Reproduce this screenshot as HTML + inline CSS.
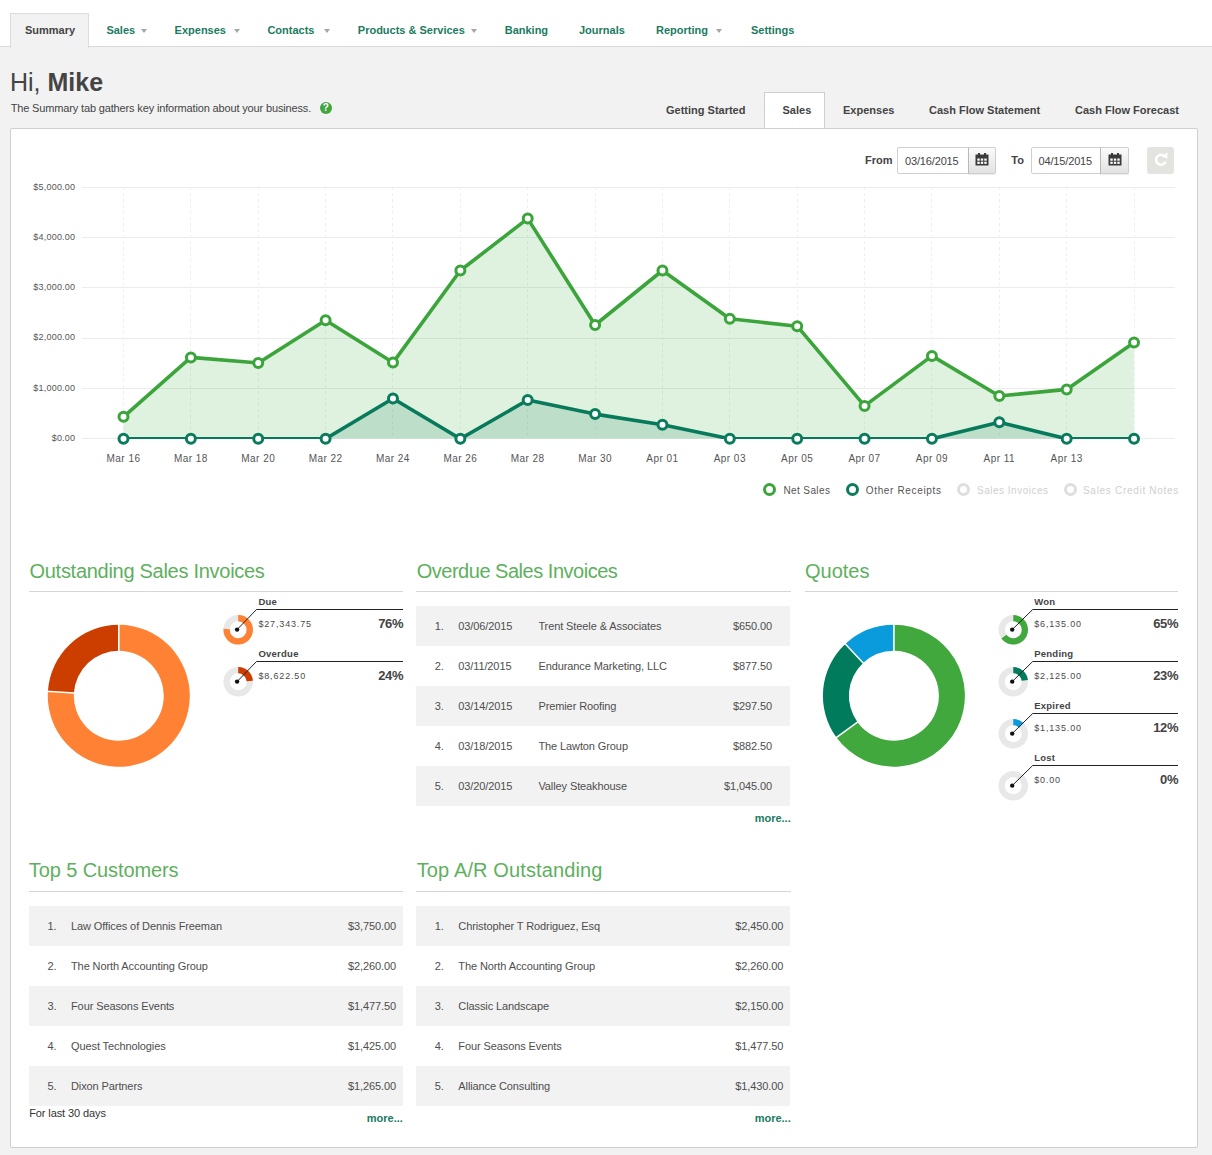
<!DOCTYPE html><html><head><meta charset="utf-8"><style>
*{margin:0;padding:0;box-sizing:border-box}
html,body{width:1212px;height:1155px;overflow:hidden;background:#f2f2f2;font-family:"Liberation Sans",sans-serif}
.t{position:absolute;white-space:pre;line-height:1}
.a{position:absolute}
</style></head><body>
<div class="a" style="left:0;top:0;width:1212px;height:47px;background:#fff;border-bottom:1px solid #d9d9d9"></div>
<div class="a" style="left:10px;top:13px;width:79px;height:35px;background:#f2f2f2;border:1px solid #dcdcdc;border-bottom:none"></div>
<div class="t" style="left:25.00px;top:24.69px;font-size:11px;color:#444;font-weight:bold;">Summary</div>
<div class="t" style="left:106.40px;top:24.69px;font-size:11px;color:#1b7b5f;font-weight:bold;">Sales</div>
<div class="a" style="left:141px;top:28.5px;width:0;height:0;border-left:3.5px solid transparent;border-right:3.5px solid transparent;border-top:4px solid #a6a6a6"></div>
<div class="t" style="left:174.60px;top:24.69px;font-size:11px;color:#1b7b5f;font-weight:bold;">Expenses</div>
<div class="a" style="left:234px;top:28.5px;width:0;height:0;border-left:3.5px solid transparent;border-right:3.5px solid transparent;border-top:4px solid #a6a6a6"></div>
<div class="t" style="left:267.40px;top:24.69px;font-size:11px;color:#1b7b5f;font-weight:bold;">Contacts</div>
<div class="a" style="left:323.5px;top:28.5px;width:0;height:0;border-left:3.5px solid transparent;border-right:3.5px solid transparent;border-top:4px solid #a6a6a6"></div>
<div class="t" style="left:357.80px;top:24.69px;font-size:11px;color:#1b7b5f;font-weight:bold;">Products &amp; Services</div>
<div class="a" style="left:471px;top:28.5px;width:0;height:0;border-left:3.5px solid transparent;border-right:3.5px solid transparent;border-top:4px solid #a6a6a6"></div>
<div class="t" style="left:504.70px;top:24.69px;font-size:11px;color:#1b7b5f;font-weight:bold;">Banking</div>
<div class="t" style="left:579.00px;top:24.69px;font-size:11px;color:#1b7b5f;font-weight:bold;">Journals</div>
<div class="t" style="left:656.00px;top:24.69px;font-size:11px;color:#1b7b5f;font-weight:bold;">Reporting</div>
<div class="a" style="left:716px;top:28.5px;width:0;height:0;border-left:3.5px solid transparent;border-right:3.5px solid transparent;border-top:4px solid #a6a6a6"></div>
<div class="t" style="left:751.00px;top:24.69px;font-size:11px;color:#1b7b5f;font-weight:bold;">Settings</div>
<div class="t" style="left:10.00px;top:69.84px;font-size:25px;color:#444;">Hi, <b>Mike</b></div>
<div class="t" style="left:10.70px;top:103.19px;font-size:11px;color:#444;letter-spacing:-0.15px;">The Summary tab gathers key information about your business.</div>
<div class="a" style="left:319.5px;top:101.5px;width:12.5px;height:12.5px;border-radius:50%;background:#41a43f;color:#fff;font-size:10px;font-weight:bold;line-height:12.5px;text-align:center">?</div>
<div class="a" style="left:10px;top:128px;width:1188px;height:1020px;background:#fff;border:1px solid #cfcfcf;border-radius:2px"></div>
<div class="a" style="left:764px;top:92px;width:61px;height:36px;background:#fff;border:1px solid #cfcfcf;border-bottom:none"></div>
<div class="t" style="left:666.00px;top:105.09px;font-size:11px;color:#444;font-weight:bold;">Getting Started</div>
<div class="t" style="left:782.50px;top:105.09px;font-size:11px;color:#444;font-weight:bold;">Sales</div>
<div class="t" style="left:843.00px;top:105.09px;font-size:11px;color:#444;font-weight:bold;">Expenses</div>
<div class="t" style="left:929.00px;top:105.09px;font-size:11px;color:#444;font-weight:bold;">Cash Flow Statement</div>
<div class="t" style="left:1075.00px;top:105.09px;font-size:11px;color:#444;font-weight:bold;">Cash Flow Forecast</div>
<div class="t" style="left:865.00px;top:155.19px;font-size:11px;color:#444;font-weight:bold;">From</div>
<div class="a" style="left:897px;top:147px;width:99px;height:27px;border:1px solid #cfcfcf;border-radius:2px;background:#fff"></div>
<div class="a" style="left:967.5px;top:147px;width:28.5px;height:27px;border:1px solid #cfcfcf;border-left:1px solid #b9b9b9;border-radius:0 2px 2px 0;background:linear-gradient(#fbfbfb,#e2e2e2);box-shadow:0 1px 1px rgba(0,0,0,0.08)"></div>
<div class="t" style="left:905.00px;top:155.69px;font-size:11px;color:#444;letter-spacing:-0.15px;">03/16/2015</div>
<svg class="a" style="left:975.0px;top:153px" width="14" height="13" viewBox="0 0 14 13"><rect x="0.5" y="1.5" width="13" height="11" fill="#3a3a3a"/><rect x="3" y="0" width="2" height="3" fill="#3a3a3a"/><rect x="9" y="0" width="2" height="3" fill="#3a3a3a"/><rect x="2.3" y="5.5" width="2.4" height="2.2" fill="#fff"/><rect x="2.3" y="8.7" width="2.4" height="2.2" fill="#fff"/><rect x="5.8" y="5.5" width="2.4" height="2.2" fill="#fff"/><rect x="5.8" y="8.7" width="2.4" height="2.2" fill="#fff"/><rect x="9.3" y="5.5" width="2.4" height="2.2" fill="#fff"/><rect x="9.3" y="8.7" width="2.4" height="2.2" fill="#fff"/></svg>
<div class="t" style="left:1011.30px;top:155.19px;font-size:11px;color:#444;font-weight:bold;">To</div>
<div class="a" style="left:1030.5px;top:147px;width:98.5px;height:27px;border:1px solid #cfcfcf;border-radius:2px;background:#fff"></div>
<div class="a" style="left:1100.3px;top:147px;width:28.700000000000045px;height:27px;border:1px solid #cfcfcf;border-left:1px solid #b9b9b9;border-radius:0 2px 2px 0;background:linear-gradient(#fbfbfb,#e2e2e2);box-shadow:0 1px 1px rgba(0,0,0,0.08)"></div>
<div class="t" style="left:1038.50px;top:155.69px;font-size:11px;color:#444;letter-spacing:-0.15px;">04/15/2015</div>
<svg class="a" style="left:1107.8px;top:153px" width="14" height="13" viewBox="0 0 14 13"><rect x="0.5" y="1.5" width="13" height="11" fill="#3a3a3a"/><rect x="3" y="0" width="2" height="3" fill="#3a3a3a"/><rect x="9" y="0" width="2" height="3" fill="#3a3a3a"/><rect x="2.3" y="5.5" width="2.4" height="2.2" fill="#fff"/><rect x="2.3" y="8.7" width="2.4" height="2.2" fill="#fff"/><rect x="5.8" y="5.5" width="2.4" height="2.2" fill="#fff"/><rect x="5.8" y="8.7" width="2.4" height="2.2" fill="#fff"/><rect x="9.3" y="5.5" width="2.4" height="2.2" fill="#fff"/><rect x="9.3" y="8.7" width="2.4" height="2.2" fill="#fff"/></svg>
<div class="a" style="left:1147px;top:147px;width:27px;height:27px;border-radius:3px;background:#e3e3e0"></div>
<svg class="a" style="left:1153px;top:152px" width="16" height="16" viewBox="0 0 16 16"><path d="M12.63 9.81 A5 5 0 1 1 10.8 3.5" fill="none" stroke="#fff" stroke-width="2.5"/><path d="M9.0 4.4 L14.4 0.3 L14.4 6.8 Z" fill="#fff"/></svg>
<svg class="a" style="left:0;top:0" width="1212" height="520" viewBox="0 0 1212 520"><line x1="82" y1="438.5" x2="1175" y2="438.5" stroke="#ececec" stroke-width="1"/><line x1="82" y1="388.5" x2="1175" y2="388.5" stroke="#ececec" stroke-width="1"/><line x1="82" y1="338.5" x2="1175" y2="338.5" stroke="#ececec" stroke-width="1"/><line x1="82" y1="287.5" x2="1175" y2="287.5" stroke="#ececec" stroke-width="1"/><line x1="82" y1="237.5" x2="1175" y2="237.5" stroke="#ececec" stroke-width="1"/><line x1="82" y1="187.5" x2="1175" y2="187.5" stroke="#ececec" stroke-width="1"/><line x1="123.5" y1="187" x2="123.5" y2="438" stroke="#efefef" stroke-width="1" stroke-dasharray="3,3"/><line x1="190.5" y1="187" x2="190.5" y2="438" stroke="#efefef" stroke-width="1" stroke-dasharray="3,3"/><line x1="258.5" y1="187" x2="258.5" y2="438" stroke="#efefef" stroke-width="1" stroke-dasharray="3,3"/><line x1="325.5" y1="187" x2="325.5" y2="438" stroke="#efefef" stroke-width="1" stroke-dasharray="3,3"/><line x1="392.5" y1="187" x2="392.5" y2="438" stroke="#efefef" stroke-width="1" stroke-dasharray="3,3"/><line x1="460.5" y1="187" x2="460.5" y2="438" stroke="#efefef" stroke-width="1" stroke-dasharray="3,3"/><line x1="527.5" y1="187" x2="527.5" y2="438" stroke="#efefef" stroke-width="1" stroke-dasharray="3,3"/><line x1="595.5" y1="187" x2="595.5" y2="438" stroke="#efefef" stroke-width="1" stroke-dasharray="3,3"/><line x1="662.5" y1="187" x2="662.5" y2="438" stroke="#efefef" stroke-width="1" stroke-dasharray="3,3"/><line x1="729.5" y1="187" x2="729.5" y2="438" stroke="#efefef" stroke-width="1" stroke-dasharray="3,3"/><line x1="797.5" y1="187" x2="797.5" y2="438" stroke="#efefef" stroke-width="1" stroke-dasharray="3,3"/><line x1="864.5" y1="187" x2="864.5" y2="438" stroke="#efefef" stroke-width="1" stroke-dasharray="3,3"/><line x1="931.5" y1="187" x2="931.5" y2="438" stroke="#efefef" stroke-width="1" stroke-dasharray="3,3"/><line x1="999.5" y1="187" x2="999.5" y2="438" stroke="#efefef" stroke-width="1" stroke-dasharray="3,3"/><line x1="1066.5" y1="187" x2="1066.5" y2="438" stroke="#efefef" stroke-width="1" stroke-dasharray="3,3"/><line x1="1134.5" y1="187" x2="1134.5" y2="438" stroke="#efefef" stroke-width="1" stroke-dasharray="3,3"/><polygon points="123.50,416.80 190.87,357.40 258.24,362.90 325.61,320.30 392.98,362.60 460.35,270.50 527.72,218.60 595.09,325.00 662.46,270.50 729.83,318.80 797.20,326.20 864.57,405.90 931.94,355.90 999.31,396.00 1066.68,389.40 1134.05,342.60 1134.05,438.6 123.50,438.6" fill="#3ba53b" fill-opacity="0.16"/><polygon points="123.50,438.80 190.87,438.80 258.24,438.80 325.61,438.80 392.98,398.50 460.35,438.80 527.72,400.00 595.09,414.10 662.46,424.80 729.83,438.80 797.20,438.80 864.57,438.80 931.94,438.80 999.31,422.30 1066.68,438.80 1134.05,438.80 1134.05,438.6 123.50,438.6" fill="#007a5a" fill-opacity="0.15"/><defs><clipPath id="cc"><rect x="0" y="150" width="1212" height="289"/></clipPath></defs><polyline points="123.50,416.80 190.87,357.40 258.24,362.90 325.61,320.30 392.98,362.60 460.35,270.50 527.72,218.60 595.09,325.00 662.46,270.50 729.83,318.80 797.20,326.20 864.57,405.90 931.94,355.90 999.31,396.00 1066.68,389.40 1134.05,342.60" fill="none" stroke="#3ba53b" stroke-width="3.6" stroke-linejoin="round" clip-path="url(#cc)"/><polyline points="123.50,438.80 190.87,438.80 258.24,438.80 325.61,438.80 392.98,398.50 460.35,438.80 527.72,400.00 595.09,414.10 662.46,424.80 729.83,438.80 797.20,438.80 864.57,438.80 931.94,438.80 999.31,422.30 1066.68,438.80 1134.05,438.80" fill="none" stroke="#087a5c" stroke-width="3.6" stroke-linejoin="round" clip-path="url(#cc)"/><circle cx="123.50" cy="416.80" r="4.5" fill="#fff" stroke="#3ba53b" stroke-width="3"/><circle cx="190.87" cy="357.40" r="4.5" fill="#fff" stroke="#3ba53b" stroke-width="3"/><circle cx="258.24" cy="362.90" r="4.5" fill="#fff" stroke="#3ba53b" stroke-width="3"/><circle cx="325.61" cy="320.30" r="4.5" fill="#fff" stroke="#3ba53b" stroke-width="3"/><circle cx="392.98" cy="362.60" r="4.5" fill="#fff" stroke="#3ba53b" stroke-width="3"/><circle cx="460.35" cy="270.50" r="4.5" fill="#fff" stroke="#3ba53b" stroke-width="3"/><circle cx="527.72" cy="218.60" r="4.5" fill="#fff" stroke="#3ba53b" stroke-width="3"/><circle cx="595.09" cy="325.00" r="4.5" fill="#fff" stroke="#3ba53b" stroke-width="3"/><circle cx="662.46" cy="270.50" r="4.5" fill="#fff" stroke="#3ba53b" stroke-width="3"/><circle cx="729.83" cy="318.80" r="4.5" fill="#fff" stroke="#3ba53b" stroke-width="3"/><circle cx="797.20" cy="326.20" r="4.5" fill="#fff" stroke="#3ba53b" stroke-width="3"/><circle cx="864.57" cy="405.90" r="4.5" fill="#fff" stroke="#3ba53b" stroke-width="3"/><circle cx="931.94" cy="355.90" r="4.5" fill="#fff" stroke="#3ba53b" stroke-width="3"/><circle cx="999.31" cy="396.00" r="4.5" fill="#fff" stroke="#3ba53b" stroke-width="3"/><circle cx="1066.68" cy="389.40" r="4.5" fill="#fff" stroke="#3ba53b" stroke-width="3"/><circle cx="1134.05" cy="342.60" r="4.5" fill="#fff" stroke="#3ba53b" stroke-width="3"/><circle cx="123.50" cy="438.80" r="4.5" fill="#fff" stroke="#0a7b5c" stroke-width="3"/><circle cx="190.87" cy="438.80" r="4.5" fill="#fff" stroke="#0a7b5c" stroke-width="3"/><circle cx="258.24" cy="438.80" r="4.5" fill="#fff" stroke="#0a7b5c" stroke-width="3"/><circle cx="325.61" cy="438.80" r="4.5" fill="#fff" stroke="#0a7b5c" stroke-width="3"/><circle cx="392.98" cy="398.50" r="4.5" fill="#fff" stroke="#0a7b5c" stroke-width="3"/><circle cx="460.35" cy="438.80" r="4.5" fill="#fff" stroke="#0a7b5c" stroke-width="3"/><circle cx="527.72" cy="400.00" r="4.5" fill="#fff" stroke="#0a7b5c" stroke-width="3"/><circle cx="595.09" cy="414.10" r="4.5" fill="#fff" stroke="#0a7b5c" stroke-width="3"/><circle cx="662.46" cy="424.80" r="4.5" fill="#fff" stroke="#0a7b5c" stroke-width="3"/><circle cx="729.83" cy="438.80" r="4.5" fill="#fff" stroke="#0a7b5c" stroke-width="3"/><circle cx="797.20" cy="438.80" r="4.5" fill="#fff" stroke="#0a7b5c" stroke-width="3"/><circle cx="864.57" cy="438.80" r="4.5" fill="#fff" stroke="#0a7b5c" stroke-width="3"/><circle cx="931.94" cy="438.80" r="4.5" fill="#fff" stroke="#0a7b5c" stroke-width="3"/><circle cx="999.31" cy="422.30" r="4.5" fill="#fff" stroke="#0a7b5c" stroke-width="3"/><circle cx="1066.68" cy="438.80" r="4.5" fill="#fff" stroke="#0a7b5c" stroke-width="3"/><circle cx="1134.05" cy="438.80" r="4.5" fill="#fff" stroke="#0a7b5c" stroke-width="3"/></svg>
<div class="t" style="right:1136.80px;top:433.98px;font-size:9px;color:#555;letter-spacing:0.2px;">$0.00</div>
<div class="t" style="right:1136.80px;top:383.71px;font-size:9px;color:#555;letter-spacing:0.2px;">$1,000.00</div>
<div class="t" style="right:1136.80px;top:333.44px;font-size:9px;color:#555;letter-spacing:0.2px;">$2,000.00</div>
<div class="t" style="right:1136.80px;top:283.17px;font-size:9px;color:#555;letter-spacing:0.2px;">$3,000.00</div>
<div class="t" style="right:1136.80px;top:232.90px;font-size:9px;color:#555;letter-spacing:0.2px;">$4,000.00</div>
<div class="t" style="right:1136.80px;top:182.63px;font-size:9px;color:#555;letter-spacing:0.2px;">$5,000.00</div>
<div class="t" style="left:-176.50px;width:600px;text-align:center;top:454.34px;font-size:10px;color:#555;letter-spacing:0.45px;">Mar 16</div>
<div class="t" style="left:-109.13px;width:600px;text-align:center;top:454.34px;font-size:10px;color:#555;letter-spacing:0.45px;">Mar 18</div>
<div class="t" style="left:-41.76px;width:600px;text-align:center;top:454.34px;font-size:10px;color:#555;letter-spacing:0.45px;">Mar 20</div>
<div class="t" style="left:25.61px;width:600px;text-align:center;top:454.34px;font-size:10px;color:#555;letter-spacing:0.45px;">Mar 22</div>
<div class="t" style="left:92.98px;width:600px;text-align:center;top:454.34px;font-size:10px;color:#555;letter-spacing:0.45px;">Mar 24</div>
<div class="t" style="left:160.35px;width:600px;text-align:center;top:454.34px;font-size:10px;color:#555;letter-spacing:0.45px;">Mar 26</div>
<div class="t" style="left:227.72px;width:600px;text-align:center;top:454.34px;font-size:10px;color:#555;letter-spacing:0.45px;">Mar 28</div>
<div class="t" style="left:295.09px;width:600px;text-align:center;top:454.34px;font-size:10px;color:#555;letter-spacing:0.45px;">Mar 30</div>
<div class="t" style="left:362.46px;width:600px;text-align:center;top:454.34px;font-size:10px;color:#555;letter-spacing:0.45px;">Apr 01</div>
<div class="t" style="left:429.83px;width:600px;text-align:center;top:454.34px;font-size:10px;color:#555;letter-spacing:0.45px;">Apr 03</div>
<div class="t" style="left:497.20px;width:600px;text-align:center;top:454.34px;font-size:10px;color:#555;letter-spacing:0.45px;">Apr 05</div>
<div class="t" style="left:564.57px;width:600px;text-align:center;top:454.34px;font-size:10px;color:#555;letter-spacing:0.45px;">Apr 07</div>
<div class="t" style="left:631.94px;width:600px;text-align:center;top:454.34px;font-size:10px;color:#555;letter-spacing:0.45px;">Apr 09</div>
<div class="t" style="left:699.31px;width:600px;text-align:center;top:454.34px;font-size:10px;color:#555;letter-spacing:0.45px;">Apr 11</div>
<div class="t" style="left:766.68px;width:600px;text-align:center;top:454.34px;font-size:10px;color:#555;letter-spacing:0.45px;">Apr 13</div>
<div class="a" style="left:763px;top:483px;width:13px;height:13px;border-radius:50%;border:3px solid #3ba53b"></div>
<div class="t" style="left:783.40px;top:485.94px;font-size:10px;color:#555;letter-spacing:0.4px;">Net Sales</div>
<div class="a" style="left:845.6px;top:483px;width:13px;height:13px;border-radius:50%;border:3px solid #0a7b5c"></div>
<div class="t" style="left:865.80px;top:485.94px;font-size:10px;color:#555;letter-spacing:0.65px;">Other Receipts</div>
<div class="a" style="left:957px;top:483px;width:13px;height:13px;border-radius:50%;border:3px solid #dedede"></div>
<div class="t" style="left:977.00px;top:485.94px;font-size:10px;color:#cfcfcf;letter-spacing:0.5px;">Sales Invoices</div>
<div class="a" style="left:1063.5px;top:483px;width:13px;height:13px;border-radius:50%;border:3px solid #dedede"></div>
<div class="t" style="left:1083.00px;top:485.94px;font-size:10px;color:#cfcfcf;letter-spacing:0.7px;">Sales Credit Notes</div>
<div class="t" style="left:29.50px;top:561.27px;font-size:20px;color:#5eb05e;letter-spacing:-0.28px;">Outstanding Sales Invoices</div>
<div class="a" style="left:29px;top:591px;width:374px;height:1px;background:#d6d6d6"></div>
<svg class="a" style="left:0;top:0" width="1212" height="820" viewBox="0 0 1212 820"><path d="M118.80 624.80 A71 71 0 1 1 47.94 691.34 L73.89 692.97 A45 45 0 1 0 118.80 650.80 Z" fill="#ff8133"/><path d="M47.94 691.34 A71 71 0 0 1 118.80 624.80 L118.80 650.80 A45 45 0 0 0 73.89 692.97 Z" fill="#cc3d00"/><line x1="118.80" y1="695.80" x2="118.80" y2="622.80" stroke="#fff" stroke-width="1.6"/><line x1="118.80" y1="695.80" x2="45.94" y2="691.22" stroke="#fff" stroke-width="1.6"/></svg>
<svg class="a" style="left:0;top:0" width="1212" height="820" viewBox="0 0 1212 820"><circle cx="238.2" cy="629.8000000000001" r="11.6" fill="none" stroke="#e8e8e8" stroke-width="6.3"/><path d="M238.20 615.05 A14.75 14.75 0 1 1 223.48 628.87 L229.77 629.27 A8.45 8.45 0 1 0 238.20 621.35 Z" fill="#ff8133"/><polyline points="237.1,629.6 256.5,609.5 403,609.5" fill="none" stroke="#222" stroke-width="1"/><circle cx="237.1" cy="629.6" r="2.2" fill="#111"/><circle cx="238.2" cy="681.8000000000001" r="11.6" fill="none" stroke="#e8e8e8" stroke-width="6.3"/><path d="M238.20 667.05 A14.75 14.75 0 0 1 252.92 680.87 L246.63 681.27 A8.45 8.45 0 0 0 238.20 673.35 Z" fill="#cc3d00"/><polyline points="237.1,681.6 256.5,661.5 403,661.5" fill="none" stroke="#222" stroke-width="1"/><circle cx="237.1" cy="681.6" r="2.2" fill="#111"/></svg>
<div class="t" style="left:258.40px;top:596.66px;font-size:9.5px;color:#444;font-weight:bold;letter-spacing:0.25px;">Due</div>
<div class="t" style="left:258.40px;top:619.98px;font-size:9px;color:#4a4a4a;letter-spacing:0.85px;">$27,343.75</div>
<div class="t" style="right:809.00px;top:616.60px;font-size:13px;color:#444;font-weight:bold;letter-spacing:-0.45px;">76%</div>
<div class="t" style="left:258.40px;top:648.66px;font-size:9.5px;color:#444;font-weight:bold;letter-spacing:0.25px;">Overdue</div>
<div class="t" style="left:258.40px;top:671.98px;font-size:9px;color:#4a4a4a;letter-spacing:0.85px;">$8,622.50</div>
<div class="t" style="right:809.00px;top:668.60px;font-size:13px;color:#444;font-weight:bold;letter-spacing:-0.45px;">24%</div>
<div class="t" style="left:416.70px;top:561.27px;font-size:20px;color:#5eb05e;letter-spacing:-0.48px;">Overdue Sales Invoices</div>
<div class="a" style="left:416px;top:591px;width:374.5px;height:1px;background:#d6d6d6"></div>
<div class="a" style="left:416px;top:606px;width:374px;height:40px;background:#f2f2f2"></div>
<div class="t" style="left:434.80px;top:620.59px;font-size:11px;color:#4e4e4e;letter-spacing:-0.1px;">1.</div>
<div class="t" style="left:458.20px;top:620.59px;font-size:11px;color:#4e4e4e;letter-spacing:-0.1px;">03/06/2015</div>
<div class="t" style="left:538.40px;top:620.59px;font-size:11px;color:#4e4e4e;letter-spacing:-0.1px;">Trent Steele &amp; Associates</div>
<div class="t" style="right:440.00px;top:620.59px;font-size:11px;color:#4e4e4e;letter-spacing:-0.1px;">$650.00</div>
<div class="t" style="left:434.80px;top:660.59px;font-size:11px;color:#4e4e4e;letter-spacing:-0.1px;">2.</div>
<div class="t" style="left:458.20px;top:660.59px;font-size:11px;color:#4e4e4e;letter-spacing:-0.1px;">03/11/2015</div>
<div class="t" style="left:538.40px;top:660.59px;font-size:11px;color:#4e4e4e;letter-spacing:-0.1px;">Endurance Marketing, LLC</div>
<div class="t" style="right:440.00px;top:660.59px;font-size:11px;color:#4e4e4e;letter-spacing:-0.1px;">$877.50</div>
<div class="a" style="left:416px;top:686px;width:374px;height:40px;background:#f2f2f2"></div>
<div class="t" style="left:434.80px;top:700.59px;font-size:11px;color:#4e4e4e;letter-spacing:-0.1px;">3.</div>
<div class="t" style="left:458.20px;top:700.59px;font-size:11px;color:#4e4e4e;letter-spacing:-0.1px;">03/14/2015</div>
<div class="t" style="left:538.40px;top:700.59px;font-size:11px;color:#4e4e4e;letter-spacing:-0.1px;">Premier Roofing</div>
<div class="t" style="right:440.00px;top:700.59px;font-size:11px;color:#4e4e4e;letter-spacing:-0.1px;">$297.50</div>
<div class="t" style="left:434.80px;top:740.59px;font-size:11px;color:#4e4e4e;letter-spacing:-0.1px;">4.</div>
<div class="t" style="left:458.20px;top:740.59px;font-size:11px;color:#4e4e4e;letter-spacing:-0.1px;">03/18/2015</div>
<div class="t" style="left:538.40px;top:740.59px;font-size:11px;color:#4e4e4e;letter-spacing:-0.1px;">The Lawton Group</div>
<div class="t" style="right:440.00px;top:740.59px;font-size:11px;color:#4e4e4e;letter-spacing:-0.1px;">$882.50</div>
<div class="a" style="left:416px;top:766px;width:374px;height:40px;background:#f2f2f2"></div>
<div class="t" style="left:434.80px;top:780.59px;font-size:11px;color:#4e4e4e;letter-spacing:-0.1px;">5.</div>
<div class="t" style="left:458.20px;top:780.59px;font-size:11px;color:#4e4e4e;letter-spacing:-0.1px;">03/20/2015</div>
<div class="t" style="left:538.40px;top:780.59px;font-size:11px;color:#4e4e4e;letter-spacing:-0.1px;">Valley Steakhouse</div>
<div class="t" style="right:440.00px;top:780.59px;font-size:11px;color:#4e4e4e;letter-spacing:-0.1px;">$1,045.00</div>
<div class="t" style="right:421.30px;top:812.69px;font-size:11px;color:#1b7b5f;font-weight:bold;">more...</div>
<div class="t" style="left:805.00px;top:561.27px;font-size:20px;color:#5eb05e;">Quotes</div>
<div class="a" style="left:804.5px;top:591px;width:373.5px;height:1px;background:#d6d6d6"></div>
<svg class="a" style="left:0;top:0" width="1212" height="820" viewBox="0 0 1212 820"><path d="M893.90 624.70 A71 71 0 1 1 836.46 737.43 L857.49 722.15 A45 45 0 1 0 893.90 650.70 Z" fill="#41a83e"/><path d="M836.46 737.43 A71 71 0 0 1 845.30 643.94 L863.10 662.90 A45 45 0 0 0 857.49 722.15 Z" fill="#007c5c"/><path d="M845.30 643.94 A71 71 0 0 1 893.90 624.70 L893.90 650.70 A45 45 0 0 0 863.10 662.90 Z" fill="#0a9bdc"/><line x1="893.90" y1="695.70" x2="893.90" y2="622.70" stroke="#fff" stroke-width="1.6"/><line x1="893.90" y1="695.70" x2="834.84" y2="738.61" stroke="#fff" stroke-width="1.6"/><line x1="893.90" y1="695.70" x2="843.93" y2="642.49" stroke="#fff" stroke-width="1.6"/></svg>
<svg class="a" style="left:0;top:0" width="1212" height="820" viewBox="0 0 1212 820"><circle cx="1013.3000000000001" cy="629.8000000000001" r="11.6" fill="none" stroke="#e8e8e8" stroke-width="6.3"/><path d="M1013.30 615.05 A14.75 14.75 0 1 1 1001.37 638.47 L1006.46 634.77 A8.45 8.45 0 1 0 1013.30 621.35 Z" fill="#41a83e"/><polyline points="1012.2,629.6 1032.7,609.5 1178,609.5" fill="none" stroke="#222" stroke-width="1"/><circle cx="1012.2" cy="629.6" r="2.2" fill="#111"/><circle cx="1013.3000000000001" cy="681.8000000000001" r="11.6" fill="none" stroke="#e8e8e8" stroke-width="6.3"/><path d="M1013.30 667.05 A14.75 14.75 0 0 1 1027.93 679.95 L1021.68 680.74 A8.45 8.45 0 0 0 1013.30 673.35 Z" fill="#007c5c"/><polyline points="1012.2,681.6 1032.7,661.5 1178,661.5" fill="none" stroke="#222" stroke-width="1"/><circle cx="1012.2" cy="681.6" r="2.2" fill="#111"/><circle cx="1013.3000000000001" cy="733.8000000000001" r="11.6" fill="none" stroke="#e8e8e8" stroke-width="6.3"/><path d="M1013.30 719.05 A14.75 14.75 0 0 1 1023.40 723.05 L1019.08 727.64 A8.45 8.45 0 0 0 1013.30 725.35 Z" fill="#0a9bdc"/><polyline points="1012.2,733.6 1032.7,713.5 1178,713.5" fill="none" stroke="#222" stroke-width="1"/><circle cx="1012.2" cy="733.6" r="2.2" fill="#111"/><circle cx="1013.3000000000001" cy="785.8000000000001" r="11.6" fill="none" stroke="#e8e8e8" stroke-width="6.3"/><polyline points="1012.2,785.6 1032.7,765.5 1178,765.5" fill="none" stroke="#222" stroke-width="1"/><circle cx="1012.2" cy="785.6" r="2.2" fill="#111"/></svg>
<div class="t" style="left:1034.20px;top:596.66px;font-size:9.5px;color:#444;font-weight:bold;letter-spacing:0.25px;">Won</div>
<div class="t" style="left:1034.20px;top:619.98px;font-size:9px;color:#4a4a4a;letter-spacing:0.85px;">$6,135.00</div>
<div class="t" style="right:34.00px;top:616.60px;font-size:13px;color:#444;font-weight:bold;letter-spacing:-0.45px;">65%</div>
<div class="t" style="left:1034.20px;top:648.66px;font-size:9.5px;color:#444;font-weight:bold;letter-spacing:0.25px;">Pending</div>
<div class="t" style="left:1034.20px;top:671.98px;font-size:9px;color:#4a4a4a;letter-spacing:0.85px;">$2,125.00</div>
<div class="t" style="right:34.00px;top:668.60px;font-size:13px;color:#444;font-weight:bold;letter-spacing:-0.45px;">23%</div>
<div class="t" style="left:1034.20px;top:700.66px;font-size:9.5px;color:#444;font-weight:bold;letter-spacing:0.25px;">Expired</div>
<div class="t" style="left:1034.20px;top:723.98px;font-size:9px;color:#4a4a4a;letter-spacing:0.85px;">$1,135.00</div>
<div class="t" style="right:34.00px;top:720.60px;font-size:13px;color:#444;font-weight:bold;letter-spacing:-0.45px;">12%</div>
<div class="t" style="left:1034.20px;top:752.66px;font-size:9.5px;color:#444;font-weight:bold;letter-spacing:0.25px;">Lost</div>
<div class="t" style="left:1034.20px;top:775.98px;font-size:9px;color:#4a4a4a;letter-spacing:0.85px;">$0.00</div>
<div class="t" style="right:34.00px;top:772.60px;font-size:13px;color:#444;font-weight:bold;letter-spacing:-0.45px;">0%</div>
<div class="t" style="left:28.80px;top:860.47px;font-size:20px;color:#5eb05e;letter-spacing:-0.1px;">Top 5 Customers</div>
<div class="a" style="left:29px;top:891px;width:374px;height:1px;background:#d6d6d6"></div>
<div class="a" style="left:29px;top:906px;width:374px;height:40px;background:#f2f2f2"></div>
<div class="t" style="left:47.50px;top:920.59px;font-size:11px;color:#4e4e4e;letter-spacing:-0.1px;">1.</div>
<div class="t" style="left:71.00px;top:920.59px;font-size:11px;color:#4e4e4e;letter-spacing:-0.1px;">Law Offices of Dennis Freeman</div>
<div class="t" style="right:816.00px;top:920.59px;font-size:11px;color:#4e4e4e;letter-spacing:-0.1px;">$3,750.00</div>
<div class="t" style="left:47.50px;top:960.59px;font-size:11px;color:#4e4e4e;letter-spacing:-0.1px;">2.</div>
<div class="t" style="left:71.00px;top:960.59px;font-size:11px;color:#4e4e4e;letter-spacing:-0.1px;">The North Accounting Group</div>
<div class="t" style="right:816.00px;top:960.59px;font-size:11px;color:#4e4e4e;letter-spacing:-0.1px;">$2,260.00</div>
<div class="a" style="left:29px;top:986px;width:374px;height:40px;background:#f2f2f2"></div>
<div class="t" style="left:47.50px;top:1000.59px;font-size:11px;color:#4e4e4e;letter-spacing:-0.1px;">3.</div>
<div class="t" style="left:71.00px;top:1000.59px;font-size:11px;color:#4e4e4e;letter-spacing:-0.1px;">Four Seasons Events</div>
<div class="t" style="right:816.00px;top:1000.59px;font-size:11px;color:#4e4e4e;letter-spacing:-0.1px;">$1,477.50</div>
<div class="t" style="left:47.50px;top:1040.59px;font-size:11px;color:#4e4e4e;letter-spacing:-0.1px;">4.</div>
<div class="t" style="left:71.00px;top:1040.59px;font-size:11px;color:#4e4e4e;letter-spacing:-0.1px;">Quest Technologies</div>
<div class="t" style="right:816.00px;top:1040.59px;font-size:11px;color:#4e4e4e;letter-spacing:-0.1px;">$1,425.00</div>
<div class="a" style="left:29px;top:1066px;width:374px;height:40px;background:#f2f2f2"></div>
<div class="t" style="left:47.50px;top:1080.59px;font-size:11px;color:#4e4e4e;letter-spacing:-0.1px;">5.</div>
<div class="t" style="left:71.00px;top:1080.59px;font-size:11px;color:#4e4e4e;letter-spacing:-0.1px;">Dixon Partners</div>
<div class="t" style="right:816.00px;top:1080.59px;font-size:11px;color:#4e4e4e;letter-spacing:-0.1px;">$1,265.00</div>
<div class="t" style="left:29.20px;top:1107.69px;font-size:11px;color:#333;letter-spacing:-0.1px;">For last 30 days</div>
<div class="t" style="right:809.20px;top:1112.69px;font-size:11px;color:#1b7b5f;font-weight:bold;">more...</div>
<div class="t" style="left:416.70px;top:860.47px;font-size:20px;color:#5eb05e;letter-spacing:0.13px;">Top A/R Outstanding</div>
<div class="a" style="left:416px;top:891px;width:374.5px;height:1px;background:#d6d6d6"></div>
<div class="a" style="left:416px;top:906px;width:374px;height:40px;background:#f2f2f2"></div>
<div class="t" style="left:434.80px;top:920.59px;font-size:11px;color:#4e4e4e;letter-spacing:-0.1px;">1.</div>
<div class="t" style="left:458.30px;top:920.59px;font-size:11px;color:#4e4e4e;letter-spacing:-0.1px;">Christopher T Rodriguez, Esq</div>
<div class="t" style="right:428.80px;top:920.59px;font-size:11px;color:#4e4e4e;letter-spacing:-0.1px;">$2,450.00</div>
<div class="t" style="left:434.80px;top:960.59px;font-size:11px;color:#4e4e4e;letter-spacing:-0.1px;">2.</div>
<div class="t" style="left:458.30px;top:960.59px;font-size:11px;color:#4e4e4e;letter-spacing:-0.1px;">The North Accounting Group</div>
<div class="t" style="right:428.80px;top:960.59px;font-size:11px;color:#4e4e4e;letter-spacing:-0.1px;">$2,260.00</div>
<div class="a" style="left:416px;top:986px;width:374px;height:40px;background:#f2f2f2"></div>
<div class="t" style="left:434.80px;top:1000.59px;font-size:11px;color:#4e4e4e;letter-spacing:-0.1px;">3.</div>
<div class="t" style="left:458.30px;top:1000.59px;font-size:11px;color:#4e4e4e;letter-spacing:-0.1px;">Classic Landscape</div>
<div class="t" style="right:428.80px;top:1000.59px;font-size:11px;color:#4e4e4e;letter-spacing:-0.1px;">$2,150.00</div>
<div class="t" style="left:434.80px;top:1040.59px;font-size:11px;color:#4e4e4e;letter-spacing:-0.1px;">4.</div>
<div class="t" style="left:458.30px;top:1040.59px;font-size:11px;color:#4e4e4e;letter-spacing:-0.1px;">Four Seasons Events</div>
<div class="t" style="right:428.80px;top:1040.59px;font-size:11px;color:#4e4e4e;letter-spacing:-0.1px;">$1,477.50</div>
<div class="a" style="left:416px;top:1066px;width:374px;height:40px;background:#f2f2f2"></div>
<div class="t" style="left:434.80px;top:1080.59px;font-size:11px;color:#4e4e4e;letter-spacing:-0.1px;">5.</div>
<div class="t" style="left:458.30px;top:1080.59px;font-size:11px;color:#4e4e4e;letter-spacing:-0.1px;">Alliance Consulting</div>
<div class="t" style="right:428.80px;top:1080.59px;font-size:11px;color:#4e4e4e;letter-spacing:-0.1px;">$1,430.00</div>
<div class="t" style="right:421.30px;top:1112.69px;font-size:11px;color:#1b7b5f;font-weight:bold;">more...</div>
</body></html>
